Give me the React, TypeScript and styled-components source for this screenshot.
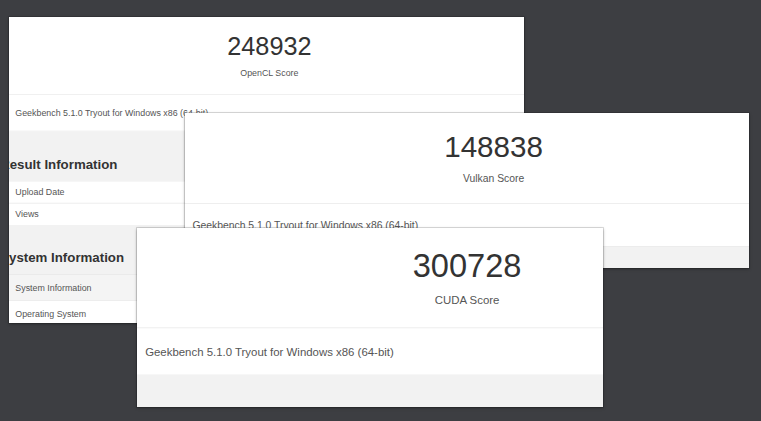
import React from "react";
import styled, { createGlobalStyle } from "styled-components";

const GlobalStyle = createGlobalStyle`
  html, body {
    margin: 0;
    padding: 0;
    background: #3d3e42;
  }
  body {
    font-family: "Liberation Sans", Arial, Helvetica, sans-serif;
  }
`;

const Desk = styled.div`
  position: relative;
  width: 761px;
  height: 421px;
  overflow: hidden;
  background: #3d3e42;
`;

// a cropped screenshot lying on the desk
const Shot = styled.div<{ $left: number; $top: number; $width: number; $height: number }>`
  position: absolute;
  left: ${p => p.$left}px;
  top: ${p => p.$top}px;
  width: ${p => p.$width}px;
  height: ${p => p.$height}px;
  overflow: hidden;
  background: #ffffff;
  box-shadow: 0 0 0 1px rgba(0, 0, 0, 0.12), 0 1px 3px rgba(0, 0, 0, 0.35);
`;

const Page = styled.div<{ $scale: number }>`
  width: 824px;
  transform: scale(${p => p.$scale});
  transform-origin: 0 0;
  background: #ffffff;
`;

// the score block sits a little off-centre in some of the crops
const ScoreBox = styled.div<{ $nudge: number }>`
  padding: 22px ${p => (p.$nudge < 0 ? -p.$nudge * 2 : 0)}px 24px ${p => (p.$nudge > 0 ? p.$nudge * 2 : 0)}px;
  text-align: center;
  border-bottom: 1px solid #e8e8e8;
`;

const ScoreValue = styled.div`
  font-size: 40px;
  line-height: 48px;
  color: #333333;
`;

const ScoreLabel = styled.div`
  margin-top: 8px;
  font-size: 14px;
  line-height: 20px;
  color: #555555;
`;

const VersionRow = styled.div`
  display: flex;
  align-items: center;
  height: 57px;
  padding: 0 10px;
  font-size: 14px;
  color: #555555;
  border-bottom: 1px solid #e4e4e4;
`;

const InfoSection = styled.div`
  background: #f2f2f2;
  padding-bottom: 40px;
`;

const SectionTitle = styled.h3`
  margin: 0 0 0 -14px;
  padding: 39px 0 13px;
  font-size: 21px;
  line-height: 26px;
  font-weight: 700;
  color: #333333;
`;

const InfoTable = styled.div`
  display: flex;
  flex-direction: column;
  background: #ffffff;
`;

const InfoRow = styled.div<{ $height: number; $shaded?: boolean }>`
  display: flex;
  align-items: center;
  height: ${p => p.$height}px;
  padding: 0 10px;
  font-size: 14px;
  color: #555555;
  border-top: 1px solid #e2e2e2;
  background: ${p => (p.$shaded ? "#f4f4f4" : "#ffffff")};
`;

type ShotSpec = {
  score: string;
  label: string;
  left: number;
  top: number;
  width: number;
  height: number;
  scale: number;
  nudge: number;
};

const shots: ShotSpec[] = [
  { score: "248932", label: "OpenCL Score", left: 9, top: 17, width: 515, height: 306, scale: 0.632, nudge: 0 },
  { score: "148838", label: "Vulkan Score", left: 185, top: 113, width: 564, height: 155, scale: 0.74, nudge: 5 },
  { score: "300728", label: "CUDA Score", left: 137, top: 228, width: 466, height: 179, scale: 0.815, nudge: -7 }
];

const ResultPage = ({ score, label, scale, nudge }: { score: string; label: string; scale: number; nudge: number }) => (
  <Page $scale={scale}>
    <ScoreBox $nudge={nudge}>
      <ScoreValue>{score}</ScoreValue>
      <ScoreLabel>{label}</ScoreLabel>
    </ScoreBox>
    <VersionRow>Geekbench 5.1.0 Tryout for Windows x86 (64-bit)</VersionRow>
    <InfoSection>
      <SectionTitle>Result Information</SectionTitle>
      <InfoTable>
        <InfoRow $height={34}>Upload Date</InfoRow>
        <InfoRow $height={34}>Views</InfoRow>
      </InfoTable>
      <SectionTitle>System Information</SectionTitle>
      <InfoTable>
        <InfoRow $height={40} $shaded>
          System Information
        </InfoRow>
        <InfoRow $height={40}>Operating System</InfoRow>
      </InfoTable>
    </InfoSection>
  </Page>
);

export default function App() {
  return (
    <>
      <GlobalStyle />
      <Desk>
        {shots.map(s => (
          <Shot key={s.score} $left={s.left} $top={s.top} $width={s.width} $height={s.height}>
            <ResultPage score={s.score} label={s.label} scale={s.scale} nudge={s.nudge} />
          </Shot>
        ))}
      </Desk>
    </>
  );
}
